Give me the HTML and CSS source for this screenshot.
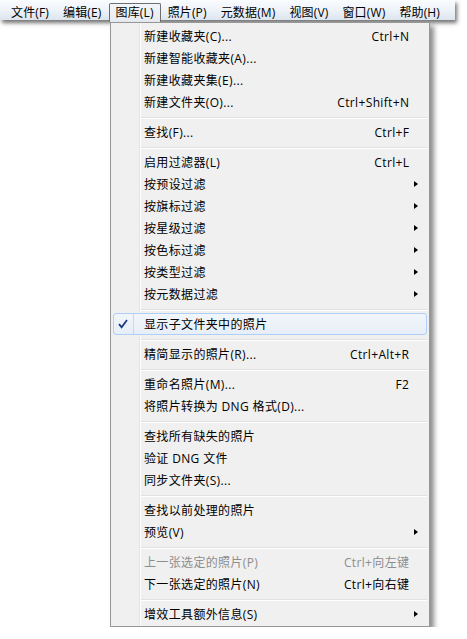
FILE: index.html
```html
<!DOCTYPE html>
<html lang="zh-CN">
<head>
<meta charset="utf-8">
<title>图库菜单</title>
<link rel="stylesheet" href="styles.css">
</head>
<body>
<div class="menubar">
  <span class="mi">文件(F)</span>
  <span class="mi">编辑(E)</span>
  <span class="mi active">图库(L)</span>
  <span class="mi">照片(P)</span>
  <span class="mi">元数据(M)</span>
  <span class="mi">视图(V)</span>
  <span class="mi">窗口(W)</span>
  <span class="mi">帮助(H)</span>
</div>
<div class="menu">
  <div class="row"><span class="gut"></span><span class="label">新建收藏夹(C)...</span><span class="key">Ctrl+N</span><span class="sub"></span></div>
  <div class="row"><span class="gut"></span><span class="label">新建智能收藏夹(A)...</span><span class="key"></span><span class="sub"></span></div>
  <div class="row"><span class="gut"></span><span class="label">新建收藏夹集(E)...</span><span class="key"></span><span class="sub"></span></div>
  <div class="row"><span class="gut"></span><span class="label">新建文件夹(O)...</span><span class="key">Ctrl+Shift+N</span><span class="sub"></span></div>
  <div class="sep"></div>
  <div class="row"><span class="gut"></span><span class="label">查找(F)...</span><span class="key">Ctrl+F</span><span class="sub"></span></div>
  <div class="sep"></div>
  <div class="row"><span class="gut"></span><span class="label">启用过滤器(L)</span><span class="key">Ctrl+L</span><span class="sub"></span></div>
  <div class="row"><span class="gut"></span><span class="label">按预设过滤</span><span class="key"></span><span class="sub"><i class="arrow"></i></span></div>
  <div class="row"><span class="gut"></span><span class="label">按旗标过滤</span><span class="key"></span><span class="sub"><i class="arrow"></i></span></div>
  <div class="row"><span class="gut"></span><span class="label">按星级过滤</span><span class="key"></span><span class="sub"><i class="arrow"></i></span></div>
  <div class="row"><span class="gut"></span><span class="label">按色标过滤</span><span class="key"></span><span class="sub"><i class="arrow"></i></span></div>
  <div class="row"><span class="gut"></span><span class="label">按类型过滤</span><span class="key"></span><span class="sub"><i class="arrow"></i></span></div>
  <div class="row"><span class="gut"></span><span class="label">按元数据过滤</span><span class="key"></span><span class="sub"><i class="arrow"></i></span></div>
  <div class="sep"></div>
  <div class="row hot"><span class="gut checked"><svg class="check" width="10" height="10" viewBox="0 0 10 10"><path d="M1 5.2 L3.6 8.2 L9 1" fill="none" stroke="#1c3a82" stroke-width="1.8"/></svg></span><span class="label">显示子文件夹中的照片</span><span class="key"></span><span class="sub"></span></div>
  <div class="sep"></div>
  <div class="row"><span class="gut"></span><span class="label">精简显示的照片(R)...</span><span class="key">Ctrl+Alt+R</span><span class="sub"></span></div>
  <div class="sep"></div>
  <div class="row"><span class="gut"></span><span class="label">重命名照片(M)...</span><span class="key">F2</span><span class="sub"></span></div>
  <div class="row"><span class="gut"></span><span class="label">将照片转换为 DNG 格式(D)...</span><span class="key"></span><span class="sub"></span></div>
  <div class="sep"></div>
  <div class="row"><span class="gut"></span><span class="label">查找所有缺失的照片</span><span class="key"></span><span class="sub"></span></div>
  <div class="row"><span class="gut"></span><span class="label">验证 DNG 文件</span><span class="key"></span><span class="sub"></span></div>
  <div class="row"><span class="gut"></span><span class="label">同步文件夹(S)...</span><span class="key"></span><span class="sub"></span></div>
  <div class="sep"></div>
  <div class="row"><span class="gut"></span><span class="label">查找以前处理的照片</span><span class="key"></span><span class="sub"></span></div>
  <div class="row"><span class="gut"></span><span class="label">预览(V)</span><span class="key"></span><span class="sub"><i class="arrow"></i></span></div>
  <div class="sep"></div>
  <div class="row disabled"><span class="gut"></span><span class="label">上一张选定的照片(P)</span><span class="key">Ctrl+向左键</span><span class="sub"></span></div>
  <div class="row"><span class="gut"></span><span class="label">下一张选定的照片(N)</span><span class="key">Ctrl+向右键</span><span class="sub"></span></div>
  <div class="sep"></div>
  <div class="row"><span class="gut"></span><span class="label">增效工具额外信息(S)</span><span class="key"></span><span class="sub"><i class="arrow"></i></span></div>
</div>
</body>
</html>
```

FILE: styles.css
```css
html, body {
  margin: 0;
  padding: 0;
  background: #ffffff;
}

body {
  font-family: "Open Sans", "Noto Sans CJK SC", sans-serif;
  font-size: 12px;
  letter-spacing: 0.35px;
  color: #000000;
}

.menubar {
  position: relative;
  z-index: 1;
  display: flex;
  width: 455px;
  height: 20px;
  box-sizing: border-box;
  padding-left: 4px;
  letter-spacing: 0.15px;
  background: linear-gradient(to bottom, #fafcfe 0%, #eef3f9 50%, #dce4ee 100%);
  box-shadow: 2px 3px 4px rgba(0, 0, 0, 0.55);
}

.mi {
  display: block;
  margin-top: 3px;
  height: 19px;
  box-sizing: border-box;
  padding: 0 6px;
  line-height: 17px;
  border: 1px solid transparent;
  border-bottom: none;
  white-space: nowrap;
}

.mi.active {
  border-color: #6f6f6f;
  border-radius: 2px 2px 0 0;
  background: linear-gradient(to bottom, #f2f5f9, #e6ebf1);
}

.menu {
  position: relative;
  z-index: 2;
  margin: 2px 0 0 110px;
  width: 320px;
  box-sizing: border-box;
  padding: 2px 2px 1px 2px;
  border: 1px solid #979797;
  background-color: #f0f0f0;
  background-image: linear-gradient(to right, transparent 28px, #e2e3e3 28px, #e2e3e3 29px, #ffffff 29px, #ffffff 30px, transparent 30px);
  box-shadow: 4px 4px 5px rgba(0, 0, 0, 0.45);
}

.row {
  display: grid;
  grid-template-columns: 31px 1fr auto 18px;
  align-items: center;
  height: 22px;
  box-sizing: border-box;
  white-space: nowrap;
}

.gut {
  display: flex;
  align-items: center;
  justify-content: center;
  height: 100%;
  box-sizing: border-box;
}

.key {
  text-align: right;
  margin-right: -0.35px;
}

.sub {
  display: flex;
  align-items: center;
  height: 100%;
}

.arrow {
  display: block;
  margin-left: 5px;
  width: 0;
  height: 0;
  border-top: 3.5px solid transparent;
  border-bottom: 3.5px solid transparent;
  border-left: 4px solid #000000;
}

.sep {
  height: 8px;
  box-sizing: border-box;
  margin-left: 28px;
  padding-top: 4px;
}

.sep::before {
  content: "";
  display: block;
  height: 0;
  border-top: 1px solid #e0e0e0;
  border-bottom: 1px solid #ffffff;
}

.row.hot {
  border: 1px solid #aecff7;
  border-radius: 3px;
  background: linear-gradient(to bottom, #f2f6fb, #e6eef8);
  grid-template-columns: 30px 1fr auto 17px;
}

.row.hot .gut.checked {
  width: 20px;
  border-right: 1px solid #c4daf4;
  padding-right: 1px;
}

.check {
  display: block;
}

.row.disabled {
  color: #8d8d8d;
}
```
